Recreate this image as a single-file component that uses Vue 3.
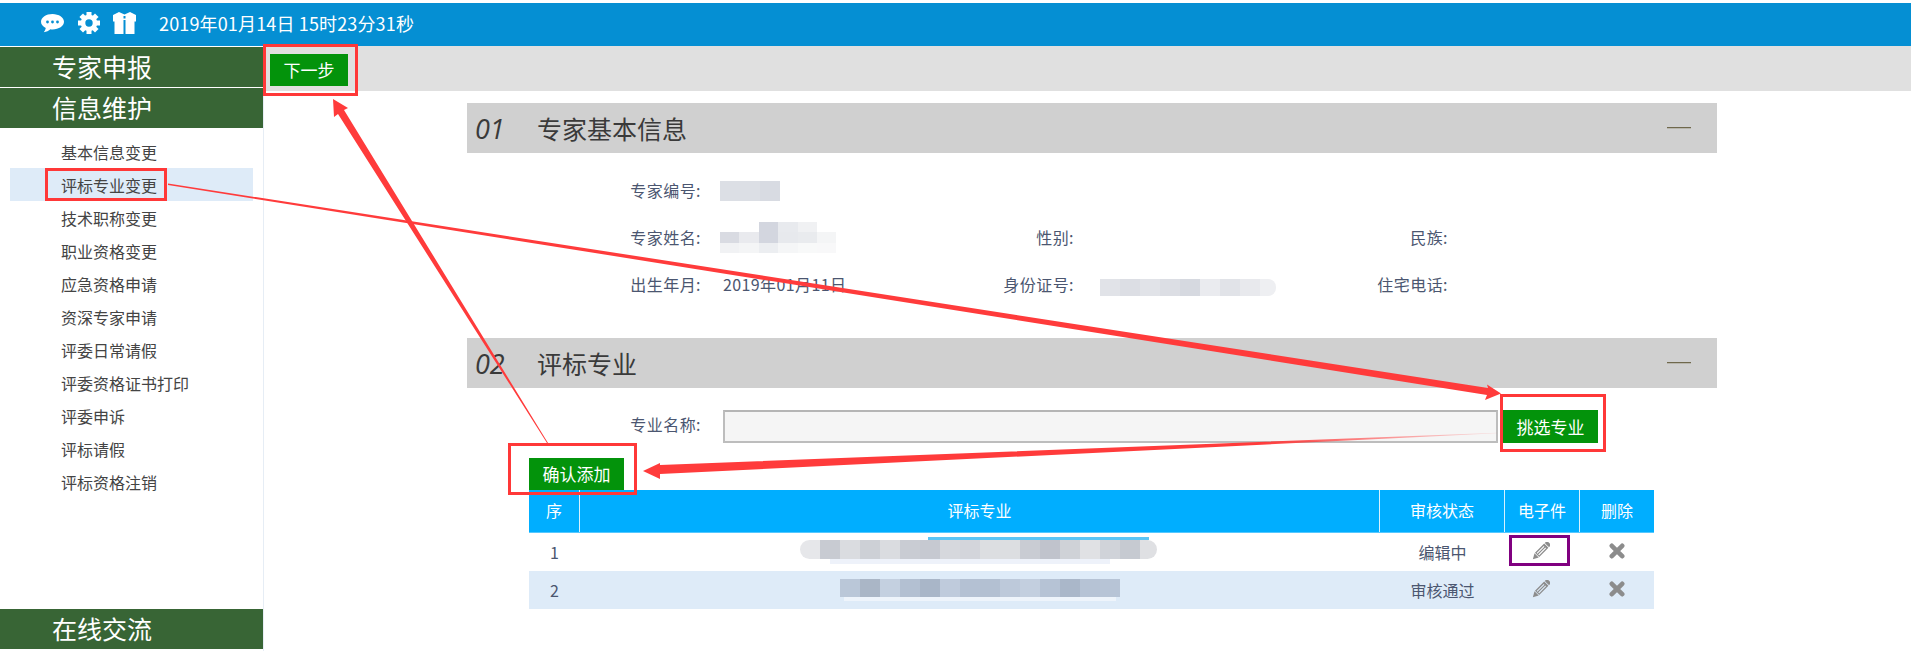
<script setup>
const t = 'transparent'
const sideTop = ['专家申报', '信息维护']
const menu = ['基本信息变更', '评标专业变更', '技术职称变更', '职业资格变更', '应急资格申请', '资深专家申请', '评委日常请假', '评委资格证书打印', '评委申诉', '评标请假', '评标资格注销']
const idBlur = ['#dcdfe5', '#dcdfe5', '#d8dbe2']
const nameBlur = [
  [t, t, '#d3d6df', '#e8eaee', '#f0f1f3', t],
  ['#d9dbe2', '#e9eaee', '#d3d6df', '#e7e9ed', '#e9ebee', '#f4f5f6'],
  ['#f1f2f4', '#f4f5f6', '#eceef1', '#f5f6f7', '#f8f9f9', '#f8f8f9']
]
const cardBlur = ['#e1e3e8', '#dcdee4', '#e1e3e8', '#dcdee4', '#d6d9e0', '#eaebef', '#e1e3e8', '#e8e9ed', '#eeeff2']
const row1 = ['#e6e7ea', '#c8cbd2', '#dadce0', '#cdd0d6', '#dadce0', '#c9ccd3', '#c6c9d1', '#d6d8dd', '#d3d5db', '#dcdee1', '#dcdee1', '#c9ccd3', '#c0c3cc', '#cfd2d7', '#e0e1e4', '#d0d3d9', '#c6cad1', '#dfe0e3']
const row2 = ['#bac7d8', '#aab6c6', '#c4d0e0', '#b3c0d2', '#a9b6c8', '#bfcbdc', '#b4c1d3', '#b3c0d2', '#bdc9da', '#c3cfdf', '#b6c3d5', '#aab7c9', '#b6c3d5', '#b7c4d6']
const rows = [
  { no: 1, blur: row1, cls: 'blur-a', state: '编辑中' },
  { no: 2, blur: row2, cls: 'blur-b', state: '审核通过' }
]
const teeth = [0, 45, 90, 135, 180, 225, 270, 315]
</script>

<template>
  <div class="page">
    <header class="topbar">
      <svg class="ic-bubble" viewBox="0 0 23 19">
        <path fill="#fff" d="M11.5 0C5.1 0 0 3.5 0 7.8c0 2.6 1.9 4.9 4.8 6.3-.3 1.6-1 3-2 4.2 2.6-.4 5-1.6 6.6-3 .7.1 1.4.2 2.1.2C17.900 15.500 23 12 23 7.800S17.900 0 11.500 0z"/>
        <circle cx="6.500" cy="8" r="1.400" fill="#058fd3"/><circle cx="11.500" cy="8" r="1.400" fill="#058fd3"/><circle cx="16.500" cy="8" r="1.400" fill="#058fd3"/>
      </svg>
      <svg class="ic-gear" viewBox="0 0 22 22">
        <rect v-for="a in teeth" :key="a" x="8.500" y="0" width="5" height="5" fill="#fff" :transform="`rotate(${a} 11 11)`"/>
        <circle cx="11" cy="11" r="6" fill="none" stroke="#fff" stroke-width="4.600"/>
      </svg>
      <svg class="ic-gift" viewBox="0 0 23 22">
        <path fill="#fff" d="M0 3 6 0 11.500 2.500 17 0 23 3V9.500H21.500V22H1.500V9.500H0z"/>
        <rect x="10.500" y="8" width="2" height="14" fill="#058fd3"/>
        <rect x="10.500" y="4" width="2" height="2.500" fill="#058fd3"/>
      </svg>
      <span class="clock">2019年01月14日 15时23分31秒</span>
    </header>

    <div class="body">
      <aside class="side">
        <h3 v-for="s in sideTop" :key="s" class="side-head">{{ s }}</h3>
        <ul class="menu">
          <li v-for="(m, i) in menu" :key="m" :class="{ on: i === 1 }"><span class="menu-text">{{ m }}</span></li>
        </ul>
        <h3 class="side-head last">在线交流</h3>
      </aside>

      <main class="main">
        <div class="toolbar"><button class="btn">下一步</button></div>

        <section class="sec first">
          <div class="sec-head"><i>01</i><span class="sec-title">专家基本信息</span><b class="dash"></b></div>
          <div class="info">
            <label>专家编号:</label>
            <div class="val"><span class="mosaic shift"><span v-for="(c, i) in idBlur" :key="i" class="tile" :style="{ background: c }"></span></span></div>
            <label></label><div></div><label></label><div></div>

            <label>专家姓名:</label>
            <div class="val">
              <span class="stack shift">
                <span v-for="(r, j) in nameBlur" :key="j" class="mosaic short">
                  <span v-for="(c, i) in r" :key="i" class="tile" :style="{ background: c }"></span>
                </span>
              </span>
            </div>
            <label>性别:</label><div></div>
            <label>民族:</label><div></div>

            <label>出生年月:</label>
            <div class="val text">2019年01月11日</div>
            <label>身份证号:</label>
            <div class="val"><span class="mosaic card"><span v-for="(c, i) in cardBlur" :key="i" class="tile" :style="{ background: c }"></span></span></div>
            <label>住宅电话:</label><div></div>
          </div>
        </section>

        <section class="sec second">
          <div class="sec-head"><i>02</i><span class="sec-title">评标专业</span><b class="dash"></b></div>
          <div class="pick">
            <label>专业名称:</label>
            <input class="field" type="text" readonly />
            <button class="btn tall">挑选专业</button>
          </div>
          <div class="wrap">
            <button class="btn add">确认添加</button>
            <div class="table">
              <div class="tr th">
                <div>序</div><div>评标专业</div><div>审核状态</div><div>电子件</div><div>删除</div>
              </div>
              <div v-for="r in rows" :key="r.no" class="tr td">
                <div>{{ r.no }}</div>
                <div><span class="mosaic" :class="r.cls"><span v-for="(c, i) in r.blur" :key="i" class="tile" :style="{ background: c }"></span></span></div>
                <div>{{ r.state }}</div>
                <div>
                  <svg class="ic-pencil" viewBox="0 0 18 18">
                    <g transform="rotate(45 9 9)" fill="#8c8c8c">
                      <rect x="6" y="-2.500" width="6" height="3.200" rx="1"/>
                      <path fill-rule="evenodd" d="M6 1.500h6v13H6zM7.300 3.500v10h1.100v-10zM9.600 3.500v10h1.100v-10z"/>
                      <path d="M6 15.200h6L9 20.500z"/>
                    </g>
                  </svg>
                </div>
                <div>
                  <svg class="ic-x" viewBox="0 0 16 16"><path d="M2.800 2.800 13.200 13.200M13.200 2.800 2.800 13.200" stroke="#8c8c8c" stroke-width="4.600" stroke-linecap="round"/></svg>
                </div>
              </div>
            </div>
          </div>
        </section>
      </main>
    </div>

    <div class="mark" style="left:263px;top:44px;width:95px;height:52px"></div>
    <div class="mark" style="left:45px;top:168px;width:122px;height:33px"></div>
    <div class="mark" style="left:1500px;top:394px;width:106px;height:58px"></div>
    <div class="mark" style="left:508px;top:443px;width:129px;height:52px"></div>
    <div class="mark purple" style="left:1509px;top:535px;width:61px;height:31px"></div>

    <svg class="arrows" width="1911" height="651" viewBox="0 0 1911 651">
      <defs>
        <linearGradient id="fade" gradientUnits="userSpaceOnUse" x1="1260" y1="0" x2="1497" y2="0">
          <stop offset="0" stop-color="#ff3b3b"/>
          <stop offset="1" stop-color="#ff3b3b" stop-opacity="0.1"/>
        </linearGradient>
      </defs>
      <polygon fill="#ff3b3b" points="168,183.500 1488,388 1487,384.500 1501,393.500 1485,400 1487,395 168,185"/>
      <polygon fill="url(#fade)" points="1497,432.700 660,465 660,463 643,471 660,479 660,474 1497,433.300"/>
      <polygon fill="#ff3b3b" points="333,99 348,108 344,110 548,443 547,443 338,114 334,117"/>
    </svg>
  </div>
</template>

<style>
html, body { margin: 0; background: #fff; overflow: hidden; }
</style>

<style scoped>
.page { position: relative; width: 1911px; height: 651px; overflow: hidden; padding-top: 3px; box-sizing: border-box; font-family: "Noto Sans CJK SC", "Noto Sans", sans-serif; color: #4b5670; background: #fff; }
.topbar { height: 43px; background: #058fd3; display: flex; align-items: center; color: #fff; padding-left: 41px; box-sizing: border-box; }
.ic-bubble { width: 23px; height: 19px; margin-top: -3px; }
.ic-gear { width: 22px; height: 22px; margin-left: 14px; margin-top: -3px; }
.ic-gift { width: 23px; height: 22px; margin-left: 13px; margin-top: -3px; }
.clock { margin-left: 23px; font-size: 18px; line-height: 1; margin-top: -3px; letter-spacing: 0.15px; }
.body { display: flex; height: 605px; }
.side { width: 264px; box-sizing: border-box; border-right: 1px solid #e6edf5; display: flex; flex-direction: column; padding-top: 1px; }
.side-head { margin: 0 0 1px; height: 40px; line-height: 38px; background: #386535; color: #fff; font-weight: 400; font-size: 25px; padding-left: 52px; }
.menu { list-style: none; margin: 0; padding: 6px 0 0; flex: 1; }
.menu li { height: 33px; line-height: 35px; font-size: 16px; color: #444; margin-left: 10px; width: 243px; padding-left: 51px; box-sizing: border-box; }
.menu li.on { background: #deebf8; }
.side-head.last { margin: 0 0 2px; }
.main { flex: 1; }
.toolbar { height: 45px; background: #e0e0e0; padding: 8px 0 0 6px; box-sizing: border-box; }
.btn { display: block; border: 0; padding: 0; background: #03930b; color: #fff; font: inherit; font-size: 17px; width: 78px; height: 32px; line-height: 32px; }
.sec { margin-left: 203px; width: 1250px; }
.sec.first { margin-top: 12px; }
.sec.second { margin-top: 29px; }
.sec-head { height: 50px; background: #d0d0d0; display: flex; align-items: center; color: #3a3a3a; padding-left: 8px; position: relative; }
.sec-head i { font-family: "Open Sans", sans-serif; font-size: 27px; font-weight: 400; width: 62px; }
.sec-title { font-size: 25px; line-height: 1; }
.dash { margin-left: auto; margin-right: 26px; margin-top: -2px; width: 24px; height: 1px; background: #6f684c; box-shadow: 0 1px 0 #b8b6ad; }
.info { display: grid; grid-template-columns: 236px 137px 236px 138px 236px 1fr; grid-template-rows: 47px 47px 48px; align-items: center; margin-top: 14px; }
.info label, .pick label { text-align: right; font-size: 16px; padding-right: 2px; box-sizing: border-box; letter-spacing: 0.45px; }
.info label { padding-bottom: 2px; }
.val { padding-left: 20px; display: flex; align-items: center; white-space: nowrap; }
.val.text { font-size: 16px; letter-spacing: 0.4px; padding-bottom: 2px; }
.mosaic { display: inline-flex; }
.shift { margin-left: -3px; }
.tile { width: 20px; height: 20px; display: block; flex: none; }
.stack { display: flex; flex-direction: column; }
.mosaic.short .tile { height: 10.500px; width: 19.400px; }
.mosaic.card { margin-left: 4px; margin-top: 5px; }
.mosaic.card .tile { height: 17px; }
.mosaic.card .tile:last-child { width: 16px; border-radius: 0 8px 8px 0; }
.pick { display: flex; margin-top: 22px; align-items: stretch; height: 33px; }
.pick label { width: 236px; line-height: 28px; }
.field { width: 775px; height: 33px; box-sizing: border-box; margin-left: 20px; border: 2px solid #bdbdbd; border-top-color: #b5b5b5; background: #f5f5f5; padding: 0; }
.btn.tall { width: 95px; height: 33px; margin-left: 5px; }
.wrap { margin-left: 62px; margin-top: 15px; width: 1125px; }
.btn.add { width: 95px; }
.tr { display: grid; grid-template-columns: 51px 800px 125px 75px 74px; }
.tr > div { display: flex; align-items: center; justify-content: center; box-sizing: border-box; }
.th { height: 43px; background: #00aeff; color: #fff; font-size: 16px; border-bottom: 1px solid #55c8ff; box-sizing: border-box; }
.th > div { border-right: 1px solid #d6f1ff; padding-bottom: 2px; }
.th > div:last-child { border-right: 0; }
.td { height: 38px; font-size: 16px; }
.td:nth-child(3) { background: #deebf8; }
.blur-a { position: relative; height: 24px; margin-top: 0; margin-left: -3px; }
.blur-a .tile { height: 19px; }
.blur-a .tile:first-child { border-radius: 10px 0 0 10px; }
.blur-a .tile:last-child { border-radius: 0 10px 10px 0; width: 17px; }
.blur-a::before { content: ""; position: absolute; left: 128px; top: -3px; width: 221px; height: 3px; background: #5cc5f5; }
.blur-a::after { content: ""; position: absolute; left: 30px; top: 19px; width: 280px; height: 5px; background: #eef2fa; }
.blur-b { position: relative; height: 22px; }
.blur-b .tile { height: 18px; }
.blur-b::after { content: ""; position: absolute; left: 4px; top: 18px; width: 272px; height: 4px; background: #eef4fb; }
.ic-pencil { width: 18px; height: 18px; margin-left: -3px; margin-top: -3px; }
.ic-x { width: 16px; height: 16px; margin-top: -2px; }
.mark { position: absolute; box-sizing: border-box; border: 3px solid #ff3838; }
.mark.purple { border-color: #800080; }
.arrows { position: absolute; left: 0; top: 0; pointer-events: none; }
</style>
